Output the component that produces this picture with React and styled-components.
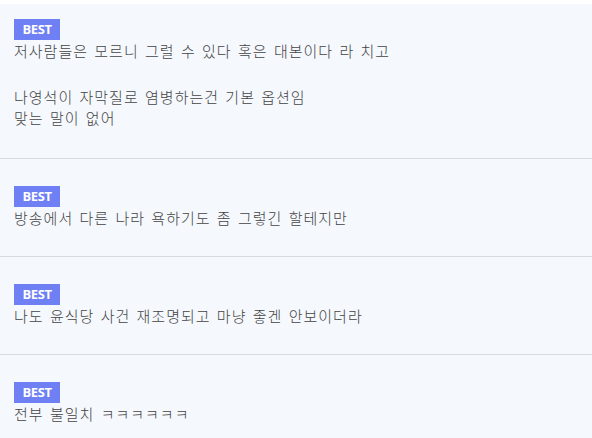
import React from 'react'
import styled, { createGlobalStyle } from 'styled-components'

const GlobalStyle = createGlobalStyle`
  html, body {
    margin: 0;
    padding: 0;
    background: #ffffff;
  }
`

const List = styled.ul`
  list-style: none;
  margin: 4px 0 0;
  padding: 0;
  background-color: #f5f8fd;
  font-family: "Noto Sans CJK KR", "Noto Sans", sans-serif;
`

const Item = styled.li`
  padding: ${props => props.top}px 14px ${props => props.bottom}px;
  border-bottom: 1px solid #d9dadd;

  &:last-child {
    border-bottom: none;
  }
`

const Badge = styled.span`
  display: flex;
  align-items: center;
  justify-content: center;
  width: 46px;
  height: 21px;
  background-color: #6e80f3;
  color: #ffffff;
  font-family: "Open Sans", "Liberation Sans", sans-serif;
  font-size: 13px;
  line-height: 1;
  font-weight: 700;
  letter-spacing: -0.4px;
`

const Body = styled.div`
  color: #444444;
  font-size: 15px;
  font-weight: 300;
  line-height: 21px;
  letter-spacing: 1px;
  word-spacing: 2px;
  white-space: nowrap;
`

const Line = styled.p`
  margin: 0;
`

const Blank = styled.div`
  height: 25px;
`

const comments = [
  { id: 1, top: 15, bottom: 30, lines: ['저사람들은 모르니 그럴 수 있다 혹은 대본이다 라 치고', '', '나영석이 자막질로 염병하는건 기본 옵션임', '맞는 말이 없어'] },
  { id: 2, top: 27, bottom: 28, lines: ['방송에서 다른 나라 욕하기도 좀 그렇긴 할테지만'] },
  { id: 3, top: 27, bottom: 28, lines: ['나도 윤식당 사건 재조명되고 마냥 좋겐 안보이더라'] },
  { id: 4, top: 27, bottom: 28, lines: ['전부 불일치 ㅋㅋㅋㅋㅋㅋ'] },
]

function App() {
  return (
    <>
      <GlobalStyle />
      <List>
        {comments.map(comment => (
          <Item key={comment.id} top={comment.top} bottom={comment.bottom}>
            <Badge>BEST</Badge>
            <Body>
              {comment.lines.map((line, i) =>
                line ? <Line key={i}>{line}</Line> : <Blank key={i} />
              )}
            </Body>
          </Item>
        ))}
      </List>
    </>
  )
}

export default App
